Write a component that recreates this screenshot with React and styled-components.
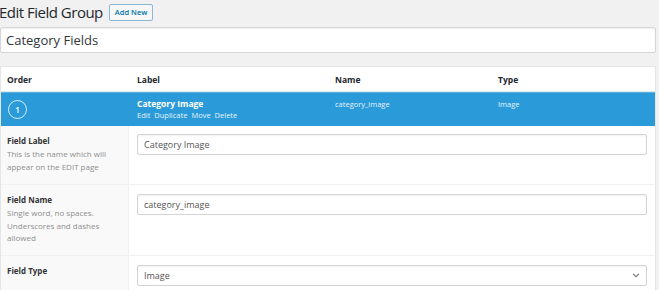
import React from 'react';
import styled, { createGlobalStyle } from 'styled-components';

const Global = createGlobalStyle`
  html, body { margin: 0; padding: 0; }
  body {
    background: #f1f1f1;
    font-family: "Open Sans", "Noto Sans", Arial, sans-serif;
    color: #23282d;
    width: 659px;
    height: 290px;
    overflow: hidden;
  }
`;

const Page = styled.div`
  padding: 0 3px 0 0;
`;

const TitleBar = styled.div`
  display: flex;
  align-items: center;
  gap: 6px;
  height: 24px;
`;

const Title = styled.h1`
  margin: 0 0 0 -1px;
  font-size: 15px;
  font-weight: 400;
  color: #23282d;
  letter-spacing: -0.5px;
`;

const AddNew = styled.button`
  height: 17px;
  padding: 0 5px;
  border: 1px solid #8ab9d6;
  background: #f7f7f7;
  border-radius: 2px;
  color: #0073aa;
  font-family: inherit;
  font-size: 7.5px;
  font-weight: 600;
`;

const TitleInput = styled.input`
  display: block;
  box-sizing: border-box;
  width: 656px;
  height: 26px;
  margin: 3px 0 0;
  padding: 0 5px;
  border: 1px solid #d6d6d6;
  border-radius: 2px;
  box-shadow: inset 0 1px 2px rgba(0,0,0,0.07);
  font-family: inherit;
  font-size: 13px;
  color: #32373c;
  background: #fff;
`;

const Panel = styled.div`
  margin-top: 13px;
  width: 656px;
  box-sizing: border-box;
  background: #fff;
  border: 1px solid #e5e5e5;
`;

const HeadRow = styled.div`
  display: grid;
  grid-template-columns: 136px 198px 163px 1fr;
  height: 24px;
  align-items: center;
  border-bottom: 1px solid #dde8ee;
`;

const HeadCell = styled.div`
  padding-left: ${p => p.$first ? '6px' : '0'};
  font-size: 8.5px;
  font-weight: 700;
  color: #23282d;
`;

const FieldRow = styled.div`
  display: grid;
  grid-template-columns: 136px 198px 163px 1fr;
  height: 33px;
  background: #2a9bd8;
  color: #fff;
  border-top: 1px solid #5cb3e3;
`;

const OrderCell = styled.div`
  display: flex;
  align-items: center;
  padding-left: 7px;
`;

const Circle = styled.span`
  width: 17px;
  height: 17px;
  border: 1px solid rgba(255,255,255,0.8);
  border-radius: 50%;
  display: flex;
  align-items: center;
  justify-content: center;
  font-size: 8px;
  font-weight: 600;
`;

const LabelCell = styled.div`
  padding-top: 5px;
`;

const FieldTitle = styled.div`
  font-size: 8.5px;
  font-weight: 700;
  line-height: 12px;
`;

const Actions = styled.div`
  display: flex;
  gap: 4px;
  font-size: 7.5px;
  line-height: 11px;
  color: #e4f2fa;
`;

const Meta = styled.div`
  padding-top: 5px;
  font-size: 7.5px;
  line-height: 12px;
  color: #e4f2fa;
`;

const SettingRow = styled.div`
  display: grid;
  grid-template-columns: 128px 1fr;
  height: ${p => p.$h}px;
  border-bottom: 1px solid #f0f0f0;
`;

const SettingLabel = styled.div`
  background: #f9f9f9;
  border-right: 1px solid #f0f0f0;
  padding: ${p => p.$pad}px 6px 0;
`;

const LabelName = styled.div`
  font-size: 8px;
  font-weight: 700;
  color: #333;
  line-height: 13px;
`;

const Desc = styled.div`
  margin-top: 1px;
  font-size: 8px;
  line-height: 12.5px;
  color: #8f8f8f;
`;

const SettingInput = styled.div`
  padding: ${p => p.$pad}px 8px 0 8px;
`;

const Box = styled.div`
  box-sizing: border-box;
  height: 21px;
  width: 510px;
  border: 1px solid #d4d4d4;
  border-radius: 2px;
  box-shadow: inset 0 1px 2px rgba(0,0,0,0.06);
  display: flex;
  align-items: center;
  justify-content: space-between;
  padding: 0 6px 0 6px;
  font-size: 9px;
  color: #555;
`;

const Chevron = () => (
  <svg width="8" height="5" viewBox="0 0 9 6">
    <path d="M1 1l3.5 3.5L8 1" fill="none" stroke="#777" strokeWidth="1.4" />
  </svg>
);

export default function App() {
  return (
    <Page>
      <Global />
      <TitleBar>
        <Title>Edit Field Group</Title>
        <AddNew>Add New</AddNew>
      </TitleBar>
      <TitleInput defaultValue="Category Fields" />
      <Panel>
        <HeadRow>
          <HeadCell $first>Order</HeadCell>
          <HeadCell>Label</HeadCell>
          <HeadCell>Name</HeadCell>
          <HeadCell>Type</HeadCell>
        </HeadRow>
        <FieldRow>
          <OrderCell><Circle>1</Circle></OrderCell>
          <LabelCell>
            <FieldTitle>Category Image</FieldTitle>
            <Actions>
              <span>Edit</span><span>Duplicate</span><span>Move</span><span>Delete</span>
            </Actions>
          </LabelCell>
          <Meta>category_image</Meta>
          <Meta>Image</Meta>
        </FieldRow>
        <SettingRow $h={58}>
          <SettingLabel $pad={8}>
            <LabelName>Field Label</LabelName>
            <Desc>This is the name which will<br />appear on the EDIT page</Desc>
          </SettingLabel>
          <SettingInput $pad={8}>
            <Box>Category Image</Box>
          </SettingInput>
        </SettingRow>
        <SettingRow $h={70}>
          <SettingLabel $pad={8}>
            <LabelName>Field Name</LabelName>
            <Desc>Single word, no spaces.<br />Underscores and dashes<br />allowed</Desc>
          </SettingLabel>
          <SettingInput $pad={9}>
            <Box>category_image</Box>
          </SettingInput>
        </SettingRow>
        <SettingRow $h={40}>
          <SettingLabel $pad={8}>
            <LabelName>Field Type</LabelName>
          </SettingLabel>
          <SettingInput $pad={9}>
            <Box>Image<Chevron /></Box>
          </SettingInput>
        </SettingRow>
      </Panel>
    </Page>
  );
}
